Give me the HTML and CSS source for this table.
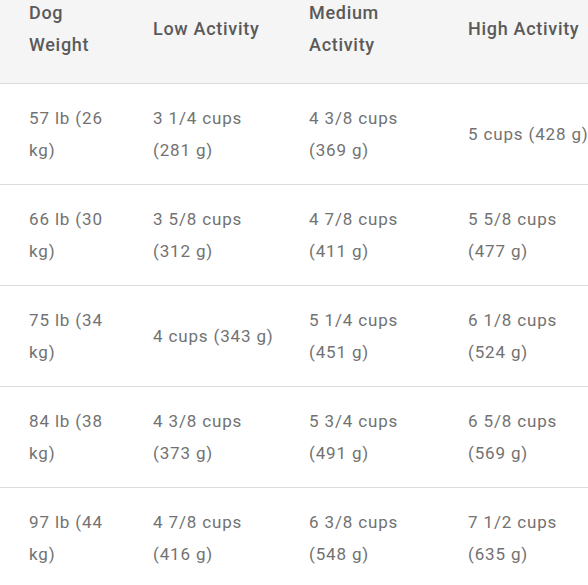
FILE: index.html
```html
<!DOCTYPE html>
<html>
<head>
<meta charset="utf-8">
<link rel="stylesheet" href="styles.css">
</head>
<body>
<div class="wrap">
<table class="feed">
<colgroup>
<col class="c1"><col class="c2"><col class="c3"><col class="c4">
</colgroup>
<thead>
<tr><th>Dog Weight</th><th>Low Activity</th><th>Medium Activity</th><th>High Activity</th></tr>
</thead>
<tbody>
<tr><td>57 lb (26 kg)</td><td>3 1/4 cups (281 g)</td><td>4 3/8 cups (369 g)</td><td>5 cups (428 g)</td></tr>
<tr><td>66 lb (30 kg)</td><td>3 5/8 cups (312 g)</td><td>4 7/8 cups (411 g)</td><td>5 5/8 cups (477 g)</td></tr>
<tr><td>75 lb (34 kg)</td><td>4 cups (343 g)</td><td>5 1/4 cups (451 g)</td><td>6 1/8 cups (524 g)</td></tr>
<tr><td>84 lb (38 kg)</td><td>4 3/8 cups (373 g)</td><td>5 3/4 cups (491 g)</td><td>6 5/8 cups (569 g)</td></tr>
<tr><td>97 lb (44 kg)</td><td>4 7/8 cups (416 g)</td><td>6 3/8 cups (548 g)</td><td>7 1/2 cups (635 g)</td></tr>
</tbody>
</table>
</div>
</body>
</html>
```
FILE: styles.css
```css
html, body {
  margin: 0;
  padding: 0;
  background: #fff;
  overflow: hidden;
}
.wrap {
  width: 588px;
  height: 585px;
  overflow: hidden;
}
.feed {
  margin-top: -25px;
  border-collapse: collapse;
  table-layout: fixed;
  width: 613px;
  font-family: Roboto, "Liberation Sans", sans-serif;
  line-height: 32px;
}
.c1 { width: 138px; }
.c2 { width: 156px; }
.c3 { width: 159px; }
.c4 { width: 160px; }
.feed th {
  background: #f5f5f5;
  color: #5a5a5a;
  font-size: 18px;
  font-weight: 500;
  letter-spacing: 0.7px;
  text-align: left;
  vertical-align: middle;
  padding: 22px 19px 22px 15px;
  border-bottom: 1px solid #dcdcdc;
}
.feed td {
  color: #727272;
  font-size: 17px;
  font-weight: 400;
  letter-spacing: 0.85px;
  vertical-align: middle;
  padding: 18px 17px 18px 15px;
  border-bottom: 1px solid #dcdcdc;
}
.feed th:nth-child(3),
.feed td:nth-child(3) {
  padding-right: 22px;
}
.feed th:nth-child(4),
.feed td:nth-child(4) {
  padding-right: 21px;
}
.feed th:first-child,
.feed td:first-child {
  padding-left: 29px;
}
```
